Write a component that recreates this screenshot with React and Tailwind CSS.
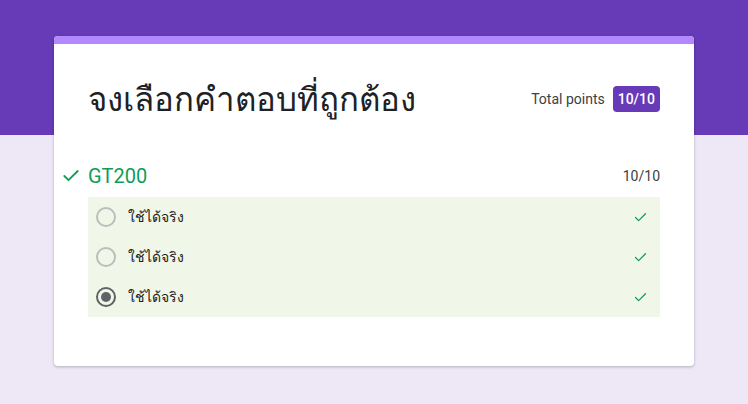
import { Check } from 'lucide-react';

const options = [
    { label: 'ใช้ได้จริง', selected: false },
    { label: 'ใช้ได้จริง', selected: false },
    { label: 'ใช้ได้จริง', selected: true },
];

function Radio({ selected }) {
    if (selected) {
        return (
            <div className="w-5 h-5 rounded-full border-2 border-[#5f6368] flex items-center justify-center">
                <div className="w-2.5 h-2.5 rounded-full bg-[#5f6368]"></div>
            </div>
        );
    }
    return <div className="w-5 h-5 rounded-full border-2 border-[#bdbdbd]"></div>;
}

export default function App() {
    return (
        <div className="relative w-[748px] h-[404px] bg-[#ede7f6] overflow-hidden" style={{ fontFamily: 'Roboto, "Noto Sans", sans-serif' }}>
            {/* purple header band */}
            <div className="h-[135px] bg-[#673ab7]"></div>

            <div className="absolute left-[54px] top-[36px] w-[640px] h-[330px] bg-white rounded-sm shadow-[0_1px_3px_rgba(0,0,0,0.25)] overflow-hidden">
                <div className="h-2 bg-[#b388ff]"></div>

                <div className="flex items-center justify-between pl-[34px] pr-[34px] pt-[34px]">
                    <h1 className="text-[33px] leading-[44px] text-[#202124]">จงเลือกคำตอบที่ถูกต้อง</h1>
                    <div className="flex items-center gap-2 mt-[-2px]">
                        <span className="text-[14px] text-[#3c4043]">Total points</span>
                        <span className="bg-[#673ab7] text-white text-[14px] font-medium rounded px-[5px] leading-[26px]">10/10</span>
                    </div>
                </div>

                <div className="flex items-center mt-[39px] pl-[7px] pr-[34px]">
                    <Check className="w-[20px] h-[20px] text-[#0f9d58]" strokeWidth={2.2} />
                    <span className="ml-[7px] text-[20px] text-[#0f9d58]">GT200</span>
                    <span className="ml-auto text-[14px] text-[#3c4043]">10/10</span>
                </div>

                <div className="mx-[34px] mt-[6px] bg-[#f0f7e8]">
                    {options.map((o, i) => (
                        <div key={i} className="h-10 flex items-center pl-2 pr-[12px]">
                            <Radio selected={o.selected} />
                            <span className="ml-3 text-[14px] text-[#202124]">{o.label}</span>
                            <Check className="ml-auto w-[15px] h-[15px] text-[#0f9d58]" strokeWidth={2} />
                        </div>
                    ))}
                </div>
            </div>
        </div>
    );
}
